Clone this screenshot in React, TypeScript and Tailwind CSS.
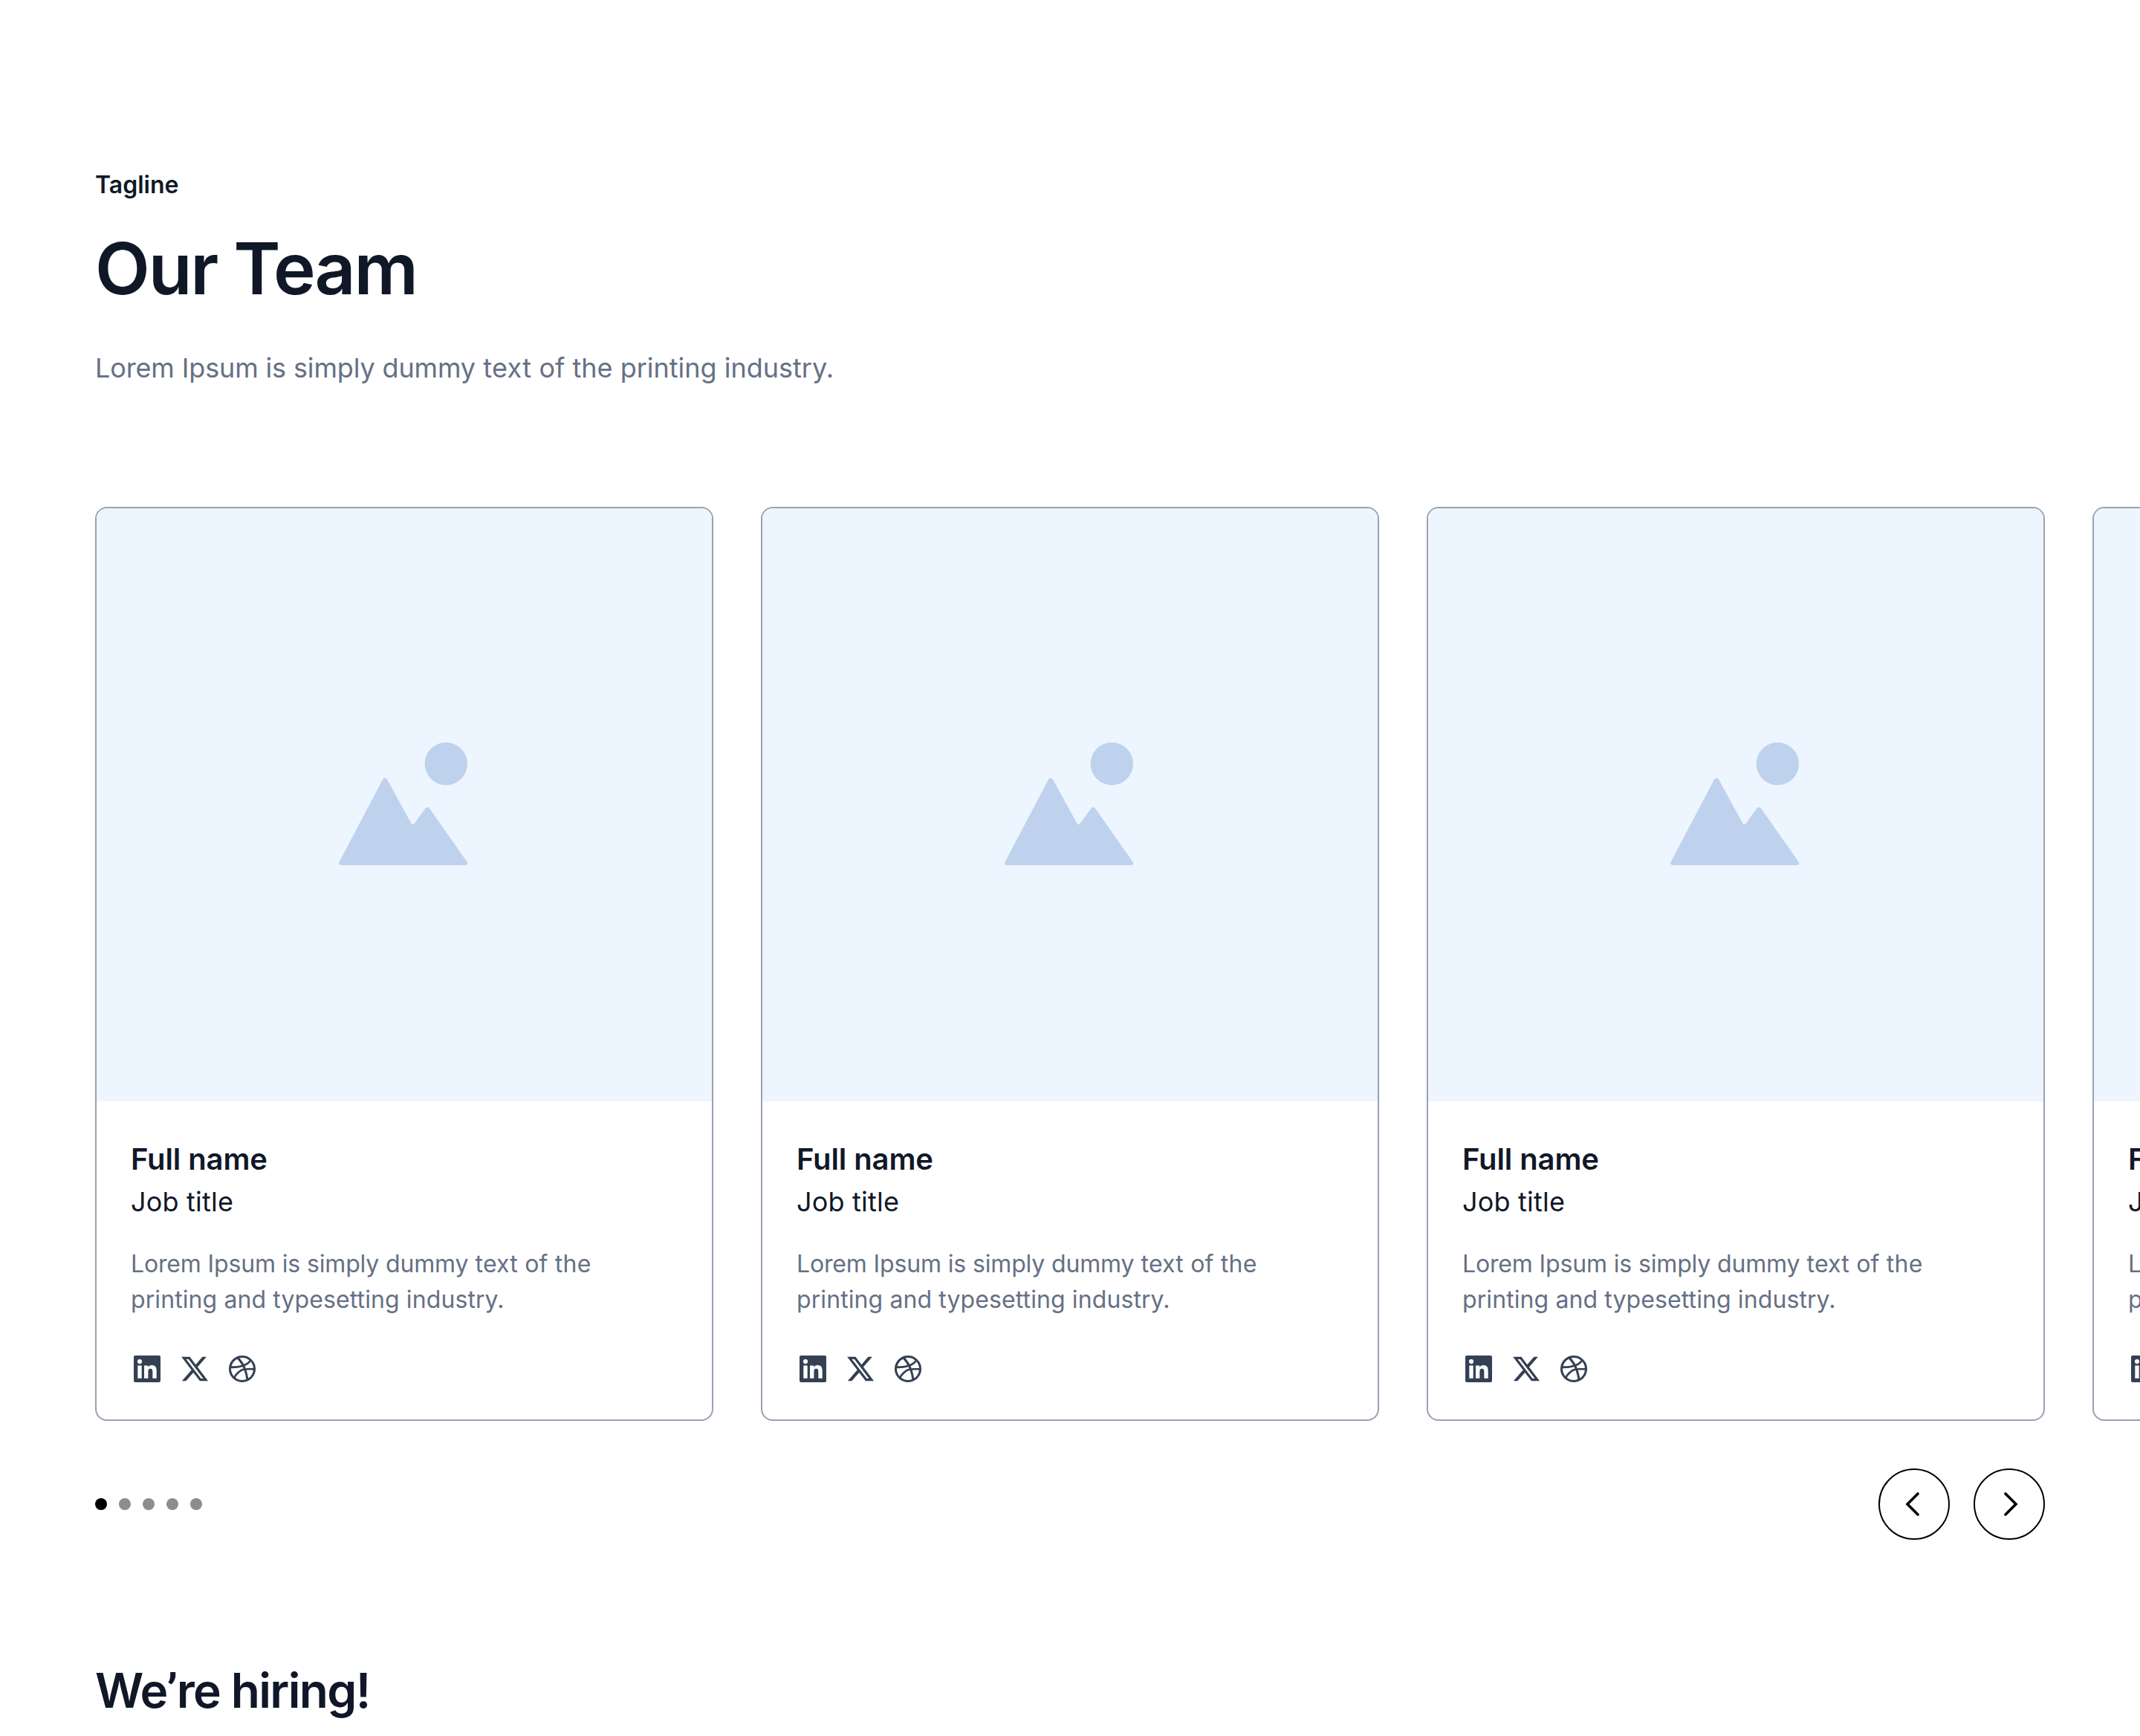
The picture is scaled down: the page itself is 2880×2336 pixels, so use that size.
import { BiLogoDribbble, BiLogoLinkedinSquare } from "react-icons/bi";
import { FaXTwitter } from "react-icons/fa6";

function ImagePlaceholder() {
  return (
    <div className="flex h-[798px] items-center justify-center bg-[#edf5ff]">
      <svg width="174" height="166" viewBox="0 0 174 166" fill="#bed2ed" className="-ml-0.5 -mt-0.5">
        <circle cx="144.3" cy="28.8" r="28.7" />
        <path d="M59.2 49.6a3.3 3.3 0 0 1 5.6 0L97.6 109.3a2.2 2.2 0 0 0 3.8 0.2L116.6 88.4a3.3 3.3 0 0 1 5.2 0L172.4 160.6a2.8 2.8 0 0 1-2.3 4.6H3a2.8 2.8 0 0 1-2.5-4.2Z" />
      </svg>
    </div>
  );
}

function TeamCard() {
  return (
    <article className="w-[832px] shrink-0 overflow-hidden rounded-2xl border-2 border-[#98a2b3] bg-white">
      <ImagePlaceholder />
      <div className="px-[46px] pb-[44px] pt-12">
        <h3 className="text-[40px] font-semibold leading-[60px] tracking-[-0.1px]">Full name</h3>
        <p className="text-4xl leading-[54px] tracking-[0.2px]">Job title</p>
        <p className="mt-[33px] w-[680px] text-[32px] leading-[48px] text-[#667085]">
          <span className="tracking-[-0.15px]">Lorem Ipsum is simply dummy</span>
          <span className="tracking-[0.2px]"> text of the </span>
          <span className="tracking-[0.1px]">printing and typesetting industry.</span>
        </p>
        <div className="-ml-0.5 mt-[45px] flex gap-4 text-[#344054]">
          <BiLogoLinkedinSquare className="size-12" />
          <FaXTwitter className="size-12 p-1" />
          <BiLogoDribbble className="size-12 p-[2.4px]" />
        </div>
      </div>
    </article>
  );
}

function ArrowButton({ label, d }: { label: string; d: string }) {
  return (
    <button
      aria-label={label}
      className="flex size-24 items-center justify-center rounded-full border-2 border-black"
    >
      <svg
        width="48"
        height="48"
        viewBox="0 0 48 48"
        fill="none"
        stroke="black"
        strokeWidth="3.6"
        strokeLinecap="round"
      >
        <path d={d} />
      </svg>
    </button>
  );
}

export default function App() {
  return (
    <main className="h-[2336px] w-[2880px] overflow-hidden bg-white pl-32 pt-[225px] font-['Inter',sans-serif] text-[#101828]">
      <header>
        <p className="text-[32px] font-semibold leading-[48px]">Tagline</p>
        <h1 className="mt-[30px] text-8xl font-semibold leading-[116px] tracking-[-2.15px]">Our Team</h1>
        <p className="mt-[49px] text-4xl leading-[54px] text-[#667085]">
          <span className="tracking-[-0.14px]">Lorem Ipsum is simply dummy</span>
          <span className="tracking-[0.3px]"> text</span> of the printing industry.
        </p>
      </header>

      <div className="mt-40 flex gap-16">
        {[0, 1, 2, 3].map((i) => (
          <TeamCard key={i} />
        ))}
      </div>

      <div className="mr-32 mt-16 flex items-center justify-between">
        <div className="flex gap-4">
          <span className="size-4 rounded-full bg-black" />
          {[1, 2, 3, 4].map((i) => (
            <span key={i} className="size-4 rounded-full bg-[#8d8d8d]" />
          ))}
        </div>
        <div className="flex gap-8">
          <ArrowButton label="Previous" d="M29 10 15 24 29 38" />
          <ArrowButton label="Next" d="M19 10 33 24 19 38" />
        </div>
      </div>

      <h2 className="mt-[161px] text-[64px] font-semibold leading-[84px] tracking-[-1.65px]">
        We<span className="font-['Roboto'] font-bold">’</span>re hiring!
      </h2>
    </main>
  );
}
